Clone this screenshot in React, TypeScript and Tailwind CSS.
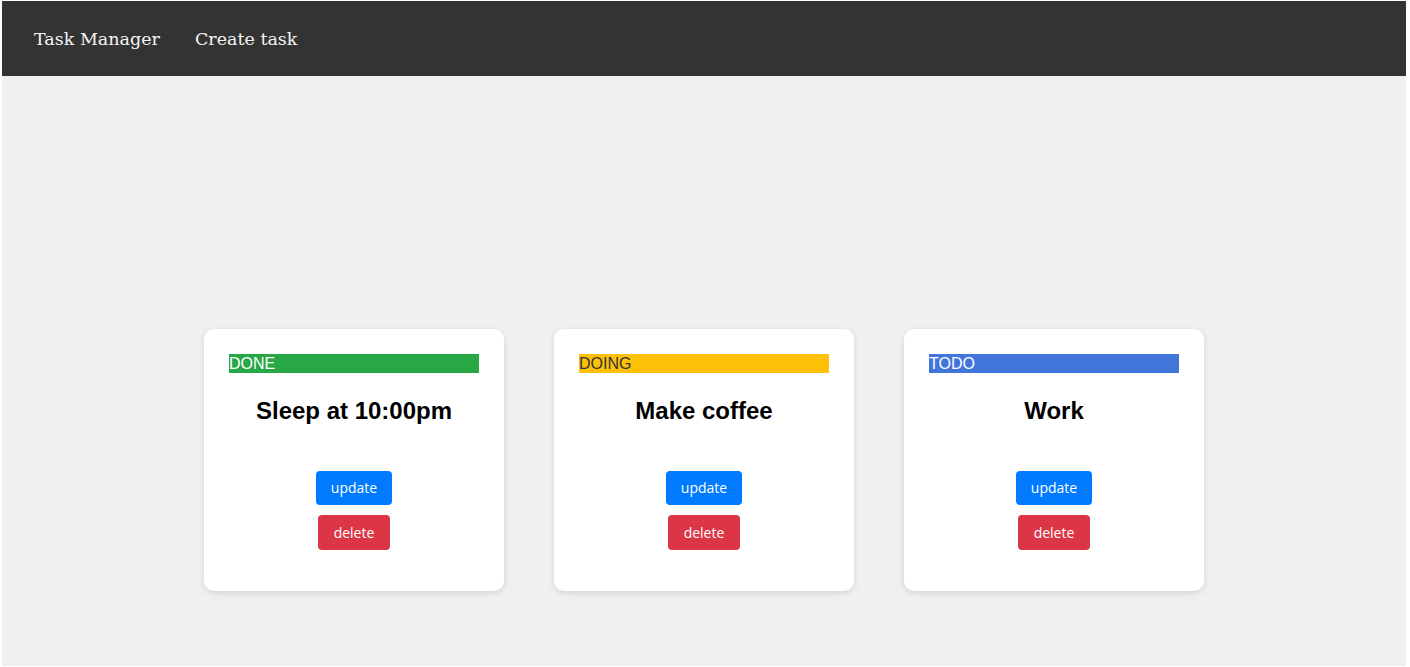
import React from "react";

type Task = { status: "DONE" | "DOING" | "TODO"; title: string };

const tasks: Task[] = [
  { status: "DONE", title: "Sleep at 10:00pm" },
  { status: "DOING", title: "Make coffee" },
  { status: "TODO", title: "Work" },
];

function StatusBar({ status }: { status: Task["status"] }) {
  const cls =
    status === "DONE"
      ? "bg-[#28a745] text-white"
      : status === "DOING"
      ? "bg-[#ffc107] text-[#333333]"
      : "bg-[#4175d9] text-white";
  return (
    <div
      className={`h-[19px] w-full text-left text-[16px] leading-[19px] ${cls}`}
      style={{ fontFamily: '"Liberation Sans", Arial, sans-serif' }}
    >
      {status}
    </div>
  );
}

function Card({ task }: { task: Task }) {
  return (
    <div className="w-[300px] rounded-[10px] bg-white px-[25px] pt-[25px] pb-[41px] shadow-[0_2px_6px_rgba(0,0,0,0.12)] flex flex-col items-center">
      <StatusBar status={task.status} />
      <h2
        className="mt-[24px] h-[28px] text-[24px] font-bold leading-[28px] text-black"
        style={{ fontFamily: '"Liberation Sans", Arial, sans-serif' }}
      >
        {task.title}
      </h2>
      <div
        className="mt-[46px] flex flex-col items-center gap-[10px]"
        style={{ fontFamily: '"Open Sans", sans-serif' }}
      >
        <button className="h-[34px] w-[76px] rounded-[4px] bg-[#007bff] pb-px text-[14px] text-white">
          update
        </button>
        <button className="h-[35px] w-[72px] rounded-[4px] bg-[#dc3545] text-[14px] text-white">
          delete
        </button>
      </div>
    </div>
  );
}

export default function App() {
  return (
    <div className="h-[667px] w-[1410px] bg-white pt-px pl-[2px] pr-[4px] pb-px">
      <div className="flex h-full flex-col bg-[#f0f0f0]">
        <nav
          className="flex h-[75px] shrink-0 items-center gap-[35px] bg-[#333333] px-[32px] pt-[2px] text-[17.5px] text-[#f5f5f5]"
          style={{ fontFamily: '"DejaVu Serif", serif' }}
        >
          <span>Task Manager</span>
          <span>Create task</span>
        </nav>
        <main className="flex flex-1 justify-center gap-[50px] pt-[253px]">
          {tasks.map((t) => (
            <div key={t.title} className="h-[262px]">
              <Card task={t} />
            </div>
          ))}
        </main>
      </div>
    </div>
  );
}
